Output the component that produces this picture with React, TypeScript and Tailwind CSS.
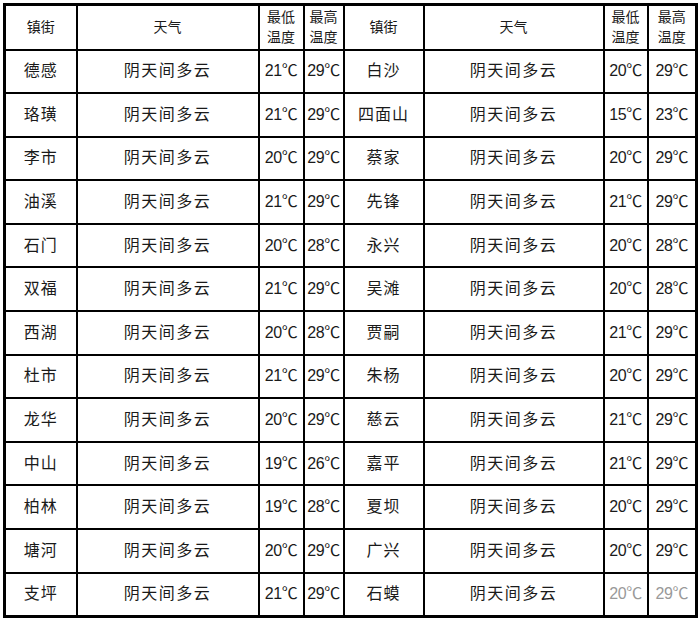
const rows: [string, string, string, string, string, string, string, string][] = [
  ['德感', '阴天间多云', '21℃', '29℃', '白沙', '阴天间多云', '20℃', '29℃'],
  ['珞璜', '阴天间多云', '21℃', '29℃', '四面山', '阴天间多云', '15℃', '23℃'],
  ['李市', '阴天间多云', '20℃', '29℃', '蔡家', '阴天间多云', '20℃', '29℃'],
  ['油溪', '阴天间多云', '21℃', '29℃', '先锋', '阴天间多云', '21℃', '29℃'],
  ['石门', '阴天间多云', '20℃', '28℃', '永兴', '阴天间多云', '20℃', '28℃'],
  ['双福', '阴天间多云', '21℃', '29℃', '吴滩', '阴天间多云', '20℃', '28℃'],
  ['西湖', '阴天间多云', '20℃', '28℃', '贾嗣', '阴天间多云', '21℃', '29℃'],
  ['杜市', '阴天间多云', '21℃', '29℃', '朱杨', '阴天间多云', '20℃', '29℃'],
  ['龙华', '阴天间多云', '20℃', '29℃', '慈云', '阴天间多云', '21℃', '29℃'],
  ['中山', '阴天间多云', '19℃', '26℃', '嘉平', '阴天间多云', '21℃', '29℃'],
  ['柏林', '阴天间多云', '19℃', '28℃', '夏坝', '阴天间多云', '20℃', '29℃'],
  ['塘河', '阴天间多云', '20℃', '29℃', '广兴', '阴天间多云', '20℃', '29℃'],
  ['支坪', '阴天间多云', '21℃', '29℃', '石蟆', '阴天间多云', '20℃', '29℃'],
];

const cell = 'border-2 border-black text-center align-middle p-0';

export default function App() {
  return (
    <div
      className="w-[700px] h-[618px] bg-white pl-[3px] pt-[3px] text-[#1a1a1a]"
      style={{ fontFamily: '"Liberation Sans", "Noto Sans CJK SC", sans-serif' }}
    >
      <table className="table-fixed border-collapse border-[3px] border-black w-[692px]">
        <colgroup>
          <col className="w-[72px]" />
          <col className="w-[182px]" />
          <col className="w-[45px]" />
          <col className="w-[40px]" />
          <col className="w-[80px]" />
          <col className="w-[180px]" />
          <col className="w-[44px]" />
          <col className="w-[49px]" />
        </colgroup>
        <thead>
          <tr className="h-[45px] text-[14px] leading-[20px]">
            <th className={`${cell} font-normal`}>镇街</th>
            <th className={`${cell} font-normal`}>天气</th>
            <th className={`${cell} font-normal`}>最低<br />温度</th>
            <th className={`${cell} font-normal`}>最高<br />温度</th>
            <th className={`${cell} font-normal`}>镇街</th>
            <th className={`${cell} font-normal`}>天气</th>
            <th className={`${cell} font-normal`}>最低<br />温度</th>
            <th className={`${cell} font-normal`}>最高<br />温度</th>
          </tr>
        </thead>
        <tbody>
          {rows.map((r, i) => {
            const last = i === rows.length - 1;
            return (
              <tr key={i} className="h-[43.6px] text-[16px]">
                <td className={`${cell} tracking-[1px]`}>{r[0]}</td>
                <td className={`${cell} tracking-[1.5px]`}>{r[1]}</td>
                <td className={`${cell} tracking-[-0.5px]`}>{r[2]}</td>
                <td className={`${cell} tracking-[-0.5px]`}>{r[3]}</td>
                <td className={`${cell} tracking-[1px]`}>{r[4]}</td>
                <td className={`${cell} tracking-[1.5px]`}>{r[5]}</td>
                <td className={`${cell} tracking-[-0.5px] ${last ? 'text-[#999]' : ''}`}>{r[6]}</td>
                <td className={`${cell} tracking-[-0.5px] ${last ? 'text-[#999]' : ''}`}>{r[7]}</td>
              </tr>
            );
          })}
        </tbody>
      </table>
    </div>
  );
}
